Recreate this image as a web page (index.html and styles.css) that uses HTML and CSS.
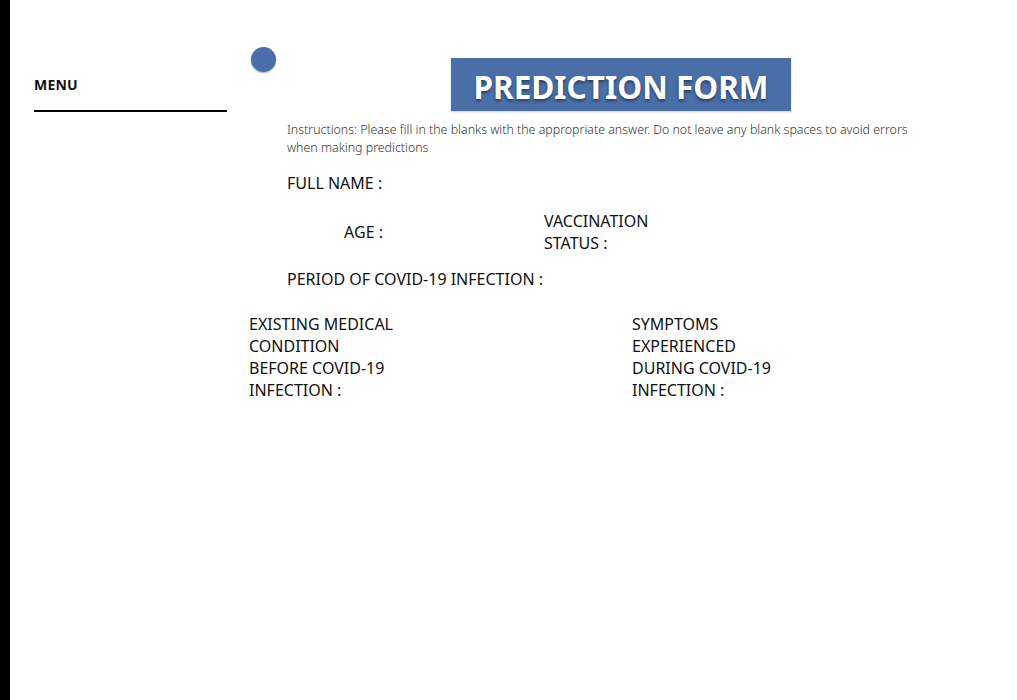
FILE: index.html
```html
<!DOCTYPE html>
<html>
<head>
<meta charset="utf-8">
<link rel="stylesheet" href="styles.css">
</head>
<body>
<div class="page">
  <div class="edge"></div>
  <aside class="sidebar">
    <div class="menu-title">MENU</div>
    <div class="menu-rule"></div>
  </aside>
  <main class="main">
    <div class="head">
      <div class="dot"></div>
      <h1 class="title">PREDICTION FORM</h1>
    </div>
    <p class="instructions">Instructions: Please fill in the blanks with the appropriate answer. Do not leave any blank spaces to avoid errors when making predictions</p>
    <div class="row-name"><span class="label">FULL NAME :</span></div>
    <div class="row-age">
      <span class="label age">AGE :</span>
      <span class="label vacc">VACCINATION<br>STATUS :</span>
    </div>
    <div class="row-period"><span class="label">PERIOD OF COVID-19 INFECTION :</span></div>
    <div class="row-cond">
      <span class="label cond">EXISTING MEDICAL<br>CONDITION<br>BEFORE COVID-19<br>INFECTION :</span>
      <span class="label cond">SYMPTOMS<br>EXPERIENCED<br>DURING COVID-19<br>INFECTION :</span>
    </div>
  </main>
</div>
</body>
</html>
```
FILE: styles.css
```css
html, body {
  margin: 0;
  padding: 0;
  background: #fff;
}
body {
  font-family: "Noto Sans", "Open Sans", sans-serif;
  color: #111;
}
.page {
  display: flex;
  min-height: 700px;
}
.edge {
  width: 10px;
  background: #000;
  flex: none;
}
.sidebar {
  width: 193px;
  padding-left: 24px;
  padding-top: 76px;
  flex: none;
}
.menu-title {
  font-weight: 700;
  font-size: 14px;
  line-height: 18px;
  letter-spacing: 0.2px;
}
.menu-rule {
  margin-top: 16px;
  height: 2px;
  background: #000;
}
.main {
  flex: 1;
  padding-left: 24px;
}
.head {
  display: flex;
  align-items: flex-start;
  padding-top: 47px;
}
.dot {
  width: 25px;
  height: 25px;
  border-radius: 50%;
  background: #4b6ea8;
  box-shadow: 0 1px 2px rgba(0,0,0,0.35);
  flex: none;
}
.title {
  margin: 11px 0 0 175px;
  width: 340px;
  height: 53px;
  background: #4a6ea7;
  color: #fff;
  font-size: 31.5px;
  font-weight: 700;
  line-height: 57px;
  text-align: center;
  text-shadow: 0 2px 3px rgba(0,0,0,0.45);
  box-shadow: 0 1px 2px rgba(0,0,0,0.2);
}
.instructions {
  margin: 10px 0 0 36px;
  width: 640px;
  font-size: 12.4px;
  line-height: 18px;
  font-weight: 300;
  color: #333;
}
.label {
  font-size: 16px;
  line-height: 22px;
}
.row-name {
  margin: 15px 0 0 36px;
}
.row-age {
  display: flex;
  align-items: center;
  margin-top: 16px;
}
.age {
  width: 132px;
  text-align: right;
}
.vacc {
  margin-left: 161px;
}
.row-period {
  margin: 14px 0 0 36px;
}
.row-cond {
  display: flex;
  margin: 23px 0 0 -2px;
}
.cond {
  width: 200px;
}
.cond + .cond {
  margin-left: 183px;
}
```
